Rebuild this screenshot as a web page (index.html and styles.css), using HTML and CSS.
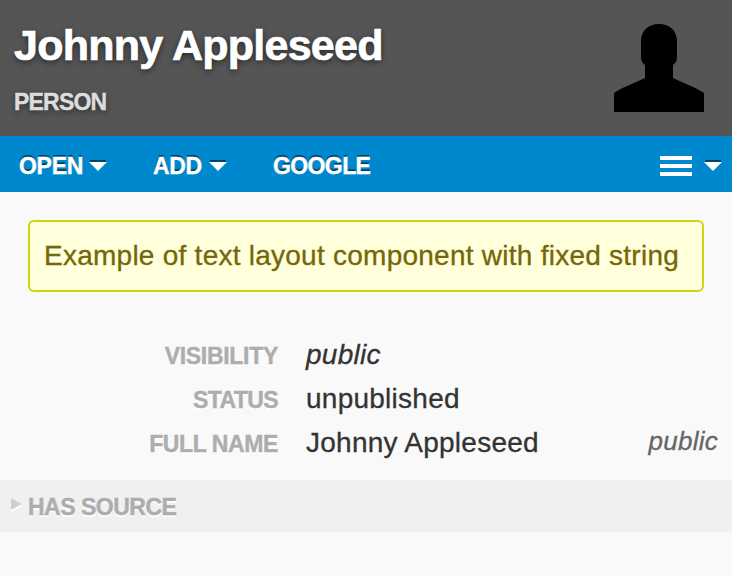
FILE: index.html
```html
<!DOCTYPE html>
<html lang="en">
<head>
<meta charset="utf-8">
<title>Johnny Appleseed</title>
<link rel="stylesheet" href="styles.css">
</head>
<body>
<header class="header">
  <div class="heading">
    <h1 class="title">Johnny Appleseed</h1>
    <div class="type">Person</div>
  </div>
  <svg class="avatar" width="90" height="88" viewBox="0 0 90 88">
    <path d="M0 88V69C5 65 20 59 31 54V41C28 39 27 36 27 33V17C27 7 34 0 45 0S63 7 63 17V33C63 36 62 39 59 41V54C70 59 85 65 90 69V88Z"/>
  </svg>
</header>
<nav class="toolbar">
  <a class="item open">Open</a>
  <svg class="caret" width="18" height="11" viewBox="0 0 18 11"><path class="shade" d="M1 0H17V2H1Z"/><path class="arrow" d="M0 2H18L9 11Z"/></svg>
  <a class="item add">Add</a>
  <svg class="caret" width="18" height="11" viewBox="0 0 18 11"><path class="shade" d="M1 0H17V2H1Z"/><path class="arrow" d="M0 2H18L9 11Z"/></svg>
  <a class="item google">Google</a>
  <svg class="menu" width="32" height="20" viewBox="0 0 32 20"><path class="arrow" d="M0 0H32V4H0ZM0 8H32V12H0ZM0 16H32V20H0Z"/></svg>
  <svg class="caret last" width="18" height="11" viewBox="0 0 18 11"><path class="shade" d="M1 0H17V2H1Z"/><path class="arrow" d="M0 2H18L9 11Z"/></svg>
</nav>
<main>
  <div class="notice">Example of text layout component with fixed string</div>
  <div class="fields">
    <div class="row"><span class="label vis">Visibility</span><span class="value it">public</span></div>
    <div class="row"><span class="label">Status</span><span class="value">unpublished</span></div>
    <div class="row"><span class="label name">Full name</span><span class="value">Johnny Appleseed</span><span class="access">public</span></div>
  </div>
  <section class="section">
    <svg class="disclosure" width="12" height="15" viewBox="0 0 12 15"><path class="light" d="M0 2L11 8L0 14Z"/><path class="tri" d="M0 0L11 6L0 12Z"/></svg>
    <span class="label source">Has source</span>
  </section>
</main>
</body>
</html>
```
FILE: styles.css
```css
* { box-sizing: border-box; }
body {
  margin: 0;
  height: 576px;
  overflow: hidden;
  background: #f9f9f9;
  color: #333;
  font: 28px/44px "Liberation Sans", Arial, sans-serif;
  letter-spacing: .25px;
}
svg { display: block; flex: none; }
.header {
  display: flex;
  justify-content: space-between;
  height: 136px;
  padding: 24px 28px 0 14px;
  background: #555;
}
.title {
  margin: -1px 0 0;
  font-size: 43px;
  line-height: 44px;
  letter-spacing: -.75px;
  color: #fff;
  -webkit-text-stroke: .7px #fff;
  text-shadow: 0 2px 6px rgba(0, 0, 0, .6);
}
.type {
  margin-top: 21px;
  font-size: 23px;
  font-weight: bold;
  line-height: 28px;
  letter-spacing: -.8px;
  text-transform: uppercase;
  color: #ddd;
  -webkit-text-stroke: .4px #ddd;
  text-shadow: 0 2px 6px rgba(0, 0, 0, .5);
}
.toolbar {
  display: flex;
  align-items: center;
  height: 56px;
  padding: 3px 10px 0 19px;
  background: #0088ce;
}
.item {
  font-size: 23px;
  font-weight: bold;
  letter-spacing: -.6px;
  text-transform: uppercase;
  color: #fff;
  -webkit-text-stroke: .4px #fff;
  text-shadow: 0 -2px 0 rgba(0, 0, 0, .5);
}
.open { width: 70px; letter-spacing: -.3px; }
.add { width: 56px; margin-left: 46px; letter-spacing: -.3px; }
.google { margin-left: 46px; }
.arrow { fill: #fff; }
.shade { fill: #004467; }
.menu { margin-left: auto; }
.last { margin-left: 12px; margin-right: 0; }
.notice {
  height: 72px;
  margin: 28px 28px 0;
  padding: 12px 14px;
  border: 2px solid #d4d20f;
  border-radius: 6px;
  background: #ffffdc;
  color: #756707;
  -webkit-text-stroke: .3px #756707;
  white-space: nowrap;
}
.fields { padding-top: 41px; }
.row { display: flex; height: 44px; padding-right: 14px; }
.label {
  width: 278px;
  padding-top: 1px;
  font-size: 23px;
  font-weight: bold;
  letter-spacing: -.6px;
  text-align: right;
  text-transform: uppercase;
  color: #adadad;
  -webkit-text-stroke: .4px #adadad;
  text-shadow: 0 2px 0 #fff;
}
.vis { letter-spacing: -.3px; }
.name { letter-spacing: -.4px; }
.value { margin-left: 28px; -webkit-text-stroke: .3px #333; }
.it { font-style: italic; }
.access {
  margin-left: auto;
  font-size: 26px;
  line-height: 41px;
  font-style: italic;
  color: #666;
  -webkit-text-stroke: .3px #666;
}
.section {
  display: flex;
  height: 52px;
  margin-top: 15px;
  padding: 5px 0 0 11px;
  background: #f0f0f0;
}
.disclosure { margin-top: 13px; }
.light { fill: #fff; }
.tri { fill: #d0d0d0; }
.source { width: auto; margin-left: 5px; padding-top: 0; letter-spacing: -.5px; }
```
